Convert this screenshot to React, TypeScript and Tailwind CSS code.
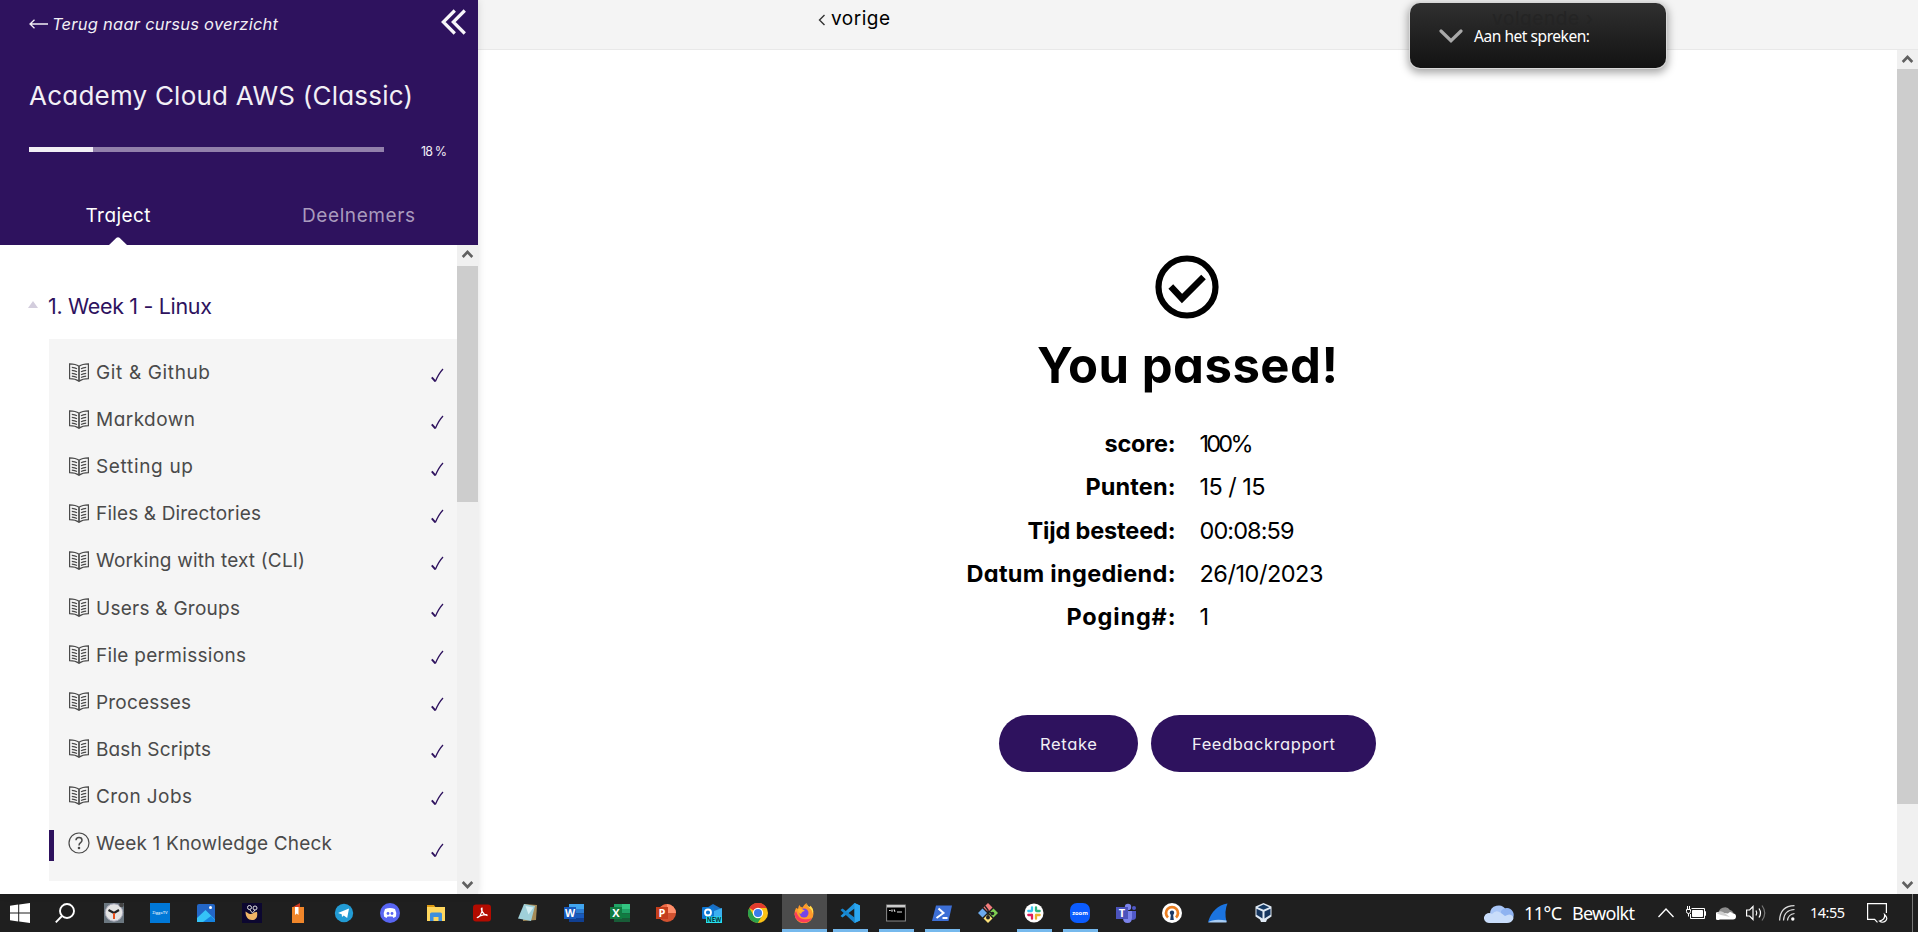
import { useLayoutEffect, useRef, type ReactNode } from "react";

/* Text set to a fixed measure: the tracking is derived from the natural width. */
function Fit({ w, children, className = "" }: { w: number; children: string; className?: string }) {
  const ref = useRef<HTMLSpanElement>(null);
  useLayoutEffect(() => {
    const el = ref.current;
    if (!el || children.length < 2) return;
    el.style.letterSpacing = "0px";
    const tracking = (w - el.getBoundingClientRect().width) / (children.length - 1);
    el.style.letterSpacing = `${tracking}px`;
    el.style.marginRight = `${-tracking}px`;
  }, [w, children]);
  return (
    <span ref={ref} className={`inline-block whitespace-pre ${className}`}>
      {children}
    </span>
  );
}

type Lesson = { title: string; w: number; quiz?: boolean };

const lessons: Lesson[] = [
  { title: "Git & Github", w: 114 },
  { title: "Markdown", w: 99 },
  { title: "Setting up", w: 97 },
  { title: "Files & Directories", w: 165 },
  { title: "Working with text (CLI)", w: 209 },
  { title: "Users & Groups", w: 144 },
  { title: "File permissions", w: 150 },
  { title: "Processes", w: 95 },
  { title: "Bash Scripts", w: 115 },
  { title: "Cron Jobs", w: 96 },
  { title: "Week 1 Knowledge Check", w: 236, quiz: true },
];

const results = [
  { label: "score:", lw: 71, value: "100%", vw: 54 },
  { label: "Punten:", lw: 90, value: "15 / 15", vw: 66 },
  { label: "Tijd besteed:", lw: 148, value: "00:08:59", vw: 95 },
  { label: "Datum ingediend:", lw: 209, value: "26/10/2023", vw: 124 },
  { label: "Poging#:", lw: 109, value: "1", vw: 8 },
];

function BookIcon() {
  return (
    <svg width="20" height="19" viewBox="0 0 20 19" fill="none" stroke="#4a4a4a" strokeWidth="1.2">
      <path d="M10 3.2C7.500 1.400 4 .8.6.8v14.800c3.400 0 6.900.8 9.400 2.600 2.500-1.800 6-2.600 9.400-2.600V.8C16 .8 12.500 1.400 10 3.200Z" />
      <path d="M10 3.200v15" strokeWidth="1.700" />
      <path d="M2.800 4.300c2 .1 3.700.5 5.200 1.400M2.800 7.300c2 .1 3.700.5 5.200 1.400M2.800 10.300c2 .1 3.700.5 5.200 1.400M2.800 13.200c2 .1 3.700.5 5.200 1.400M17.200 4.300c-2 .1-3.700.5-5.200 1.400M17.200 7.300c-2 .1-3.700.5-5.200 1.400M17.200 10.300c-2 .1-3.700.5-5.200 1.400M17.200 13.200c-2 .1-3.700.5-5.200 1.400" />
    </svg>
  );
}

function QuizIcon() {
  return (
    <svg width="22" height="22" viewBox="0 0 22 22" fill="none" stroke="#4a4a4a" strokeWidth="1.200">
      <circle cx="11" cy="11" r="10" />
      <path d="M8 8.300C8 6.500 9.200 5.500 11 5.500s3 1.100 3 2.700c0 2.500-3 2.400-3 5.200" strokeWidth="1.500" />
      <circle cx="11" cy="16" r=".7" fill="#4a4a4a" />
    </svg>
  );
}

function Tick() {
  return (
    <svg width="13" height="15" viewBox="0 0 13 15" fill="none" stroke="#2e125e">
      <path d="M.8 9.300 4.300 13.300" strokeWidth="1.900" />
      <path d="M4.300 13.600C6.200 9 8.600 4.600 12 1" strokeWidth="1.300" />
    </svg>
  );
}

function ScrollArrow({ down = false }: { down?: boolean }) {
  return (
    <svg width="21" height="18" viewBox="0 0 21 18" fill="none" stroke="#606060" strokeWidth="2.600" className="shrink-0">
      <path d={down ? "M5.700 6l4.800 5 4.800-5" : "M5.700 12l4.800-5 4.800 5"} />
    </svg>
  );
}

function Sidebar() {
  return (
    <aside className="z-10 flex w-[478px] shrink-0 flex-col shadow-[0_0_8px_rgba(0,0,0,0.13)]">
      <header className="flex h-[245px] shrink-0 flex-col bg-[#2e125e] text-[#f2eff5]">
        <div className="flex h-12 items-center pl-[29px] pr-3">
          <svg width="20" height="10" viewBox="0 0 20 10" fill="none" stroke="#f2eff5" strokeWidth="1.300">
            <path d="M19 5H1M5.500.7 1 5l4.500 4.300" />
          </svg>
          <Fit w={226} className="ml-[3px] text-[16.500px] italic leading-5">Terug naar cursus overzicht</Fit>
          <svg width="25" height="26" viewBox="0 0 25 26" fill="none" stroke="#f7f5f9" strokeWidth="3.200" className="-mt-[5px] ml-auto">
            <path d="M13.800 1.500 2.300 13l11.500 11.500M23.800 1.500 12.300 13l11.500 11.500" />
          </svg>
        </div>
        <div className="flex h-[95px] items-center pl-[29px]">
          <Fit w={384} className="mt-px text-[26px] leading-8">Academy Cloud AWS (Classic)</Fit>
        </div>
        <div className="flex h-3.5 items-center pl-[29px]">
          <div className="-mt-px h-[5px] w-[355px] bg-[#9280ab]">
            <div className="h-full w-[18%] bg-[#f2eff5]" />
          </div>
          <Fit w={26} className="ml-[37px] mt-1 text-[12.500px] leading-4">18 %</Fit>
        </div>
        <nav className="flex flex-1 text-[19px] leading-5">
          <div className="flex w-[236px] flex-col items-center justify-between pt-[49px]">
            <Fit w={65} className="text-white">Traject</Fit>
            <svg width="18" height="8" viewBox="0 0 18 8" fill="#fff">
              <path d="M0 8 7.500.800Q9-.5 10.500.800L18 8Z" />
            </svg>
          </div>
          <div className="flex flex-1 justify-center pl-[3px] pt-[49px]">
            <Fit w={113} className="text-[#a99bbd]">Deelnemers</Fit>
          </div>
        </nav>
      </header>
      <div className="flex min-h-0 flex-1 bg-white">
        <div className="flex w-[457px] flex-col">
          <h2 className="flex h-[94px] items-center pl-7 pt-6 text-[21.500px] leading-6 text-[#2e125e]">
            <svg width="10" height="7" viewBox="0 0 10 7" fill="#d3cddd">
              <path d="M5 0l5 7H0Z" />
            </svg>
            <Fit w={164} className="ml-2.5 mt-[3px]">1. Week 1 - Linux</Fit>
          </h2>
          <ul className="ml-[49px] h-[542px] bg-[#f5f5f5] pt-[9.500px] text-[19px] leading-6 text-[#4a4a4a]">
            {lessons.map((l) => (
              <li key={l.title} className="flex h-[47.100px] items-center pr-[13px]">
                <span className={`mt-[5px] h-[31px] w-[5px] ${l.quiz ? "bg-[#2e125e]" : ""}`} />
                <span className={l.quiz ? "ml-3.5" : "ml-[15px]"}>{l.quiz ? <QuizIcon /> : <BookIcon />}</span>
                <Fit w={l.w} className={l.quiz ? "ml-1.5 mt-0.5" : "ml-[7px] mt-0.5"}>{l.title}</Fit>
                <span className={`ml-auto ${l.quiz ? "mt-4" : "mt-1.5"}`}>
                  <Tick />
                </span>
              </li>
            ))}
          </ul>
        </div>
        <div className="flex w-[21px] flex-col bg-[#f0f0f0]">
          <ScrollArrow />
          <div className="mt-[3px] h-[236px] bg-[#cdcdcd]" />
          <div className="mt-auto">
            <ScrollArrow down />
          </div>
        </div>
      </div>
    </aside>
  );
}

function Result() {
  return (
    <section className="flex flex-1 flex-col items-center bg-white pt-[205px] text-black">
      <svg width="64" height="64" viewBox="0 0 64 64" fill="none" stroke="#000" className="-ml-px">
        <circle cx="32" cy="32" r="28.500" strokeWidth="6.200" />
        <path d="m15.800 31.500 11.200 12L48.500 22" strokeWidth="6.500" />
      </svg>
      <h1 className="mt-[15px] h-16 text-[49px] font-bold leading-[64px]">
        <Fit w={301}>You passed!</Fit>
      </h1>
      <dl className="mt-6 flex flex-col text-[23.500px]">
        {results.map((r) => (
          <div key={r.label} className="grid h-[43.300px] grid-cols-[220px_220px] items-center gap-[24px]">
            <dt className="text-right font-bold"><Fit w={r.lw}>{r.label}</Fit></dt>
            <dd><Fit w={r.vw}>{r.value}</Fit></dd>
          </div>
        ))}
      </dl>
      <div className="mt-[77px] flex gap-[13px] text-[16.500px] text-[#f2eff5]">
        <button className="h-[57px] w-[139px] rounded-full bg-[#2e125e]"><Fit w={57}>Retake</Fit></button>
        <button className="h-[57px] w-[225px] rounded-full bg-[#2e125e]"><Fit w={143}>Feedbackrapport</Fit></button>
      </div>
    </section>
  );
}

function Main() {
  return (
    <main className="flex flex-1 flex-col">
      <div className="flex h-[50px] items-start border-b border-[#e8e8e8] bg-[#f4f4f4] pl-[340px] pt-[7px] text-[19px] leading-[26px] text-black">
        <div className="flex items-center">
          <svg width="8" height="12" viewBox="0 0 8 12" fill="none" stroke="#333" strokeWidth="1.400"><path d="M6.500 1 1.500 6l5 5" /></svg>
          <Fit w={59} className="-mt-px ml-[5px]">vorige</Fit>
        </div>
      </div>
      <div className="flex min-h-0 flex-1">
        <Result />
        <div className="flex w-[21px] flex-col bg-[#f0f0f0]">
          <ScrollArrow />
          <div className="mt-px h-[735px] bg-[#cdcdcd]" />
          <div className="mt-auto"><ScrollArrow down /></div>
        </div>
      </div>
    </main>
  );
}

function SpeakerPopup() {
  return (
    <div className="absolute left-[1410px] top-[3px] z-20 flex h-[65px] w-[256px] items-center rounded-[10px] bg-linear-to-b from-[#303030] to-[#131313] pl-[29px] font-['Noto_Sans',sans-serif] text-white shadow-[0_0_0_1px_#d8d8d8,0_3px_9px_2px_rgba(0,0,0,0.35)]">
      <svg width="24" height="14" viewBox="0 0 24 14" fill="none" stroke="#a9a9a9" strokeWidth="3.200" strokeLinecap="round">
        <path d="M2 2l10 9.700L22 2" />
      </svg>
      <span className="absolute left-[82px] top-[5px] text-[19px] leading-[22px] text-[#242424] font-[Inter,sans-serif]"><Fit w={101}>volgende ›</Fit></span>
      <Fit w={116} className="relative ml-[11px] text-[15.500px] leading-4">Aan het spreken:</Fit>
    </div>
  );
}

type App = { name: string; open?: boolean; active?: boolean; art: ReactNode };

const glyph = "font-['Open_Sans',sans-serif] font-bold";

const apps: App[] = [
  { name: "clock", art: <>
    <path fill="#6b7780" d="M0 0h20v20H0z" /><circle cx="10" cy="9.500" r="8.700" fill="#e4e4e4" stroke="#aab" /><circle cx="17.500" cy="2" r="2.300" fill="#444" />
    <path d="M4.500 7 10 10l5-3" stroke="#222" strokeWidth="2.200" fill="none" /><path d="M10 10v6" stroke="#e8501c" strokeWidth="2" /></> },
  { name: "tv", art: <><path fill="#0078d7" d="M0 0h20v20H0z" /><text x="10" y="10.500" textAnchor="middle" fontSize="4" fill="#bfdcf5" className={glyph}>ZiggoTV</text></> },
  { name: "photos", art: <>
    <rect x="1" y="1" width="18" height="18" rx="2" fill="#2366c6" /><path d="M1 15 9.500 7l9.500 9.500V19H1Z" fill="#35c3f7" /><path d="m7 19 8-6 4 4v2Z" fill="#1583e0" /><circle cx="14.500" cy="4.500" r="1.500" fill="#fff" /></> },
  { name: "plant", art: <>
    <path fill="#0c0730" d="M0 0h20v20H0z" /><path d="M3.500 8.500c3 1.500 3 3 5.500 2.500s3-2 6-2c1 5-1 8-5 8s-6.500-3-6.500-8.500Z" fill="#efb466" /><circle cx="7.500" cy="4.500" r="2" fill="none" stroke="#ddd" /><circle cx="13" cy="5" r="2" fill="none" stroke="#ddd" /><path d="M7.500 6.500l3 3.500 2.500-3" stroke="#ddd" fill="none" /></> },
  { name: "book", art: <><path d="M4 4.500 12 0v4.500Z" fill="#cf3a20" /><path fill="#f0862a" d="M4 4h12v16H4z" /><path d="M7 4h3.500v8L8.700 10.400 7 12Z" fill="#fff" /></> },
  { name: "telegram", art: <><circle cx="10" cy="10" r="9.200" fill="#229bd4" /><path d="M4 10 15 5.500 13.200 15l-3.500-2.500L8 14l-.3-2.700Z" fill="#fff" /></> },
  { name: "discord", art: <><circle cx="10" cy="10" r="10" fill="#5865f2" /><path d="M5 6q5-2 10 0 2 4 1 7.500L13.500 15l-1-1.500h-5L6.500 15 4 13.500Q3 10 5 6Z" fill="#fff" /><circle cx="8" cy="10.500" r="1.400" fill="#5865f2" /><circle cx="12" cy="10.500" r="1.400" fill="#5865f2" /></> },
  { name: "explorer", art: <><path d="M1 2h7l2 3v3H1Z" fill="#dc9a12" /><path fill="#ffd75e" d="M1 4h18v14H1z" /><path d="M4 11q0-1.500 1.500-1.500h9Q16 9.500 16 11v7h-3.500v-4h-5v4H4Z" fill="#3f8fdc" /></> },
  { name: "acrobat", art: <><rect x="1" y="1.500" width="18" height="17" rx="3" fill="#b30b00" /><path d="M10 5c-2 0 1 7 5 7.500 1-2-7-.5-9.500 2C7 15 11 9 10 5Z" fill="none" stroke="#fff" strokeWidth="1.200" /></> },
  { name: "notepad", art: <><path d="m6 1 13 1-1 15-13 1Z" fill="#a58b57" /><path d="m6 1 11 2-4 15L0 15.500Z" fill="#9fd0d9" /><path d="m7.500 3 8 1.500-5 7Z" fill="#d5eff3" /></> },
  { name: "word", art: <><path fill="#41a5ee" d="M5 1h15v5H5z" /><path fill="#2b7cd3" d="M5 6h15v4.500H5z" /><path fill="#185abd" d="M5 10.500h15v4.500H5z" /><path fill="#103f91" d="M5 15h15v4H5z" /><path fill="#185abd" d="M0 4h12v12H0z" /><text x="6" y="13.800" textAnchor="middle" fontSize="10.500" fill="#fff" className={glyph}>W</text></> },
  { name: "excel", art: <><path fill="#21a366" d="M4 1h8v9H4z" /><path fill="#33c481" d="M12 1h8v5h-8z" /><path fill="#21a366" d="M12 6h8v4.500h-8z" /><path fill="#107c41" d="M12 10.500h8V15h-8z" /><path fill="#185c37" d="M4 10h8v5h8v4H4z" /><path fill="#107c41" d="M0 4h12v12H0z" /><text x="6" y="14" textAnchor="middle" fontSize="11" fill="#fff" className={glyph}>X</text></> },
  { name: "powerpoint", art: <><circle cx="11" cy="10" r="9" fill="#d35230" /><path d="M11 1a9 9 0 0 1 9 9h-9Z" fill="#ff8f6b" /><path d="M11 1v9H2a9 9 0 0 1 9-9Z" fill="#ed6c47" /><path fill="#c43e1c" d="M0 4h12v12H0z" /><text x="6" y="14" textAnchor="middle" fontSize="11" fill="#fff" className={glyph}>P</text></> },
  { name: "outlook", art: <><path d="M3 6 11 1l9 5v9H3Z" fill="#1a6fc4" /><path d="m12 8 8-3v9h-8Z" fill="#3bb0f0" /><rect y="4" width="12" height="12" rx="1" fill="#0f78d4" /><circle cx="6" cy="9.500" r="3" stroke="#fff" strokeWidth="1.800" fill="none" /><path fill="#26e0ee" d="M4 13.500h16V20H4z" /><text x="12" y="19" textAnchor="middle" fontSize="6.200" fill="#07343a" className={glyph}>NEW</text></> },
  { name: "chrome", art: <><circle cx="10" cy="10" r="10" fill="#fbc116" /><path d="M10 10 1.300 5A10 10 0 0 1 18.700 5H10Z" fill="#e33b2e" /><path d="M1.300 5a10 10 0 0 0 8.500 15l4.500-7.500-8.600 0Z" fill="#2ba24c" /><circle cx="10" cy="10" r="5.200" fill="#fff" /><circle cx="10" cy="10" r="4" fill="#3a7cec" /></> },
  { name: "firefox", active: true, open: true, art: <><path d="M2 5q1 0 2 1 .5-3 1.500-4 .5 2 3 2.500Q10 1.500 12.500 0q0 3 3 4 1-.5 1-1.500 3 3 3 8A9.500 9.500 0 0 1 .5 11Q.5 8 2 5Z" fill="#ff9a2b" /><path d="M.5 11A9.500 9.500 0 0 0 18 15q-4 2-9 1T2 8Z" fill="#fb3c5c" /><circle cx="10" cy="10" r="4.500" fill="#7545e8" /><path d="M4 6q4-1 7 2-3 0-4 3-3-1-3-5Z" fill="#ffb327" /><path d="M12.500 0q0 3 3 5t3 6q2-4-2-8l-1 1q-2-1-3-4Z" fill="#ffe14d" /></> },
  { name: "vscode", open: true, art: <><path d="M14.500 0 20 2.500v15L14.500 20V5.500L2.500 14.500 0.500 13 14.500 0Z" fill="#1f93dc" /><path d="M14.500 20 .5 7l2-1.500 12 9Z" fill="#1686cf" /><path d="m14.500 0 5.500 2.500v15L14.500 20Z" fill="#2aa6f0" /></> },
  { name: "terminal", open: true, art: <><rect x=".6" y="2" width="18.800" height="16" fill="#000" stroke="#8b8b8b" /><path fill="#ccc" d="M1 2h18v2.500H1z" /><path d="M3 7.500h1.700M6 6.500v2.200M8 6.500l1 2.200M11 9h5" stroke="#ddd" strokeWidth="1.200" /></> },
  { name: "powershell", open: true, art: <><path d="M4 2.500h16L16.500 18H0Z" fill="#3d6fd6" /><path d="m6.500 5.500 5 4.500-7 5M10.500 15h5" fill="none" stroke="#fff" strokeWidth="2" /></> },
  { name: "git", art: <><path d="m10 0 4.500 4.500L10 9 5.500 4.500Z" fill="#f27d7d" /><path d="m15.500 5.500 4.500 4.500-4.500 4.500L11 10Z" fill="#7fcf52" /><path d="M10 11l4.500 4.500L10 20l-4.500-4.500Z" fill="#fbe27a" /><path d="M4.500 5.500 9 10l-4.500 4.500L0 10Z" fill="#6cabee" /><path d="M7 3l3 4v8M10 8l5 3" stroke="#222" strokeWidth="1.400" fill="none" /><circle cx="10" cy="14.500" r="2" fill="#222" /><circle cx="14.500" cy="10.500" r="1.800" fill="#222" /></> },
  { name: "slack", open: true, art: <><circle cx="10" cy="10" r="9.500" fill="#fff" /><g fill="none" strokeWidth="2.300" strokeLinecap="round"><path d="M8 4.300v3.400M4.300 8h3.400" stroke="#36c5f0" /><path d="M12 4.300v3.400M12.500 8h3.200" stroke="#2eb67d" /><path d="M12 12v3.700M12.500 12h3.200" stroke="#ecb22e" /><path d="M8 12v3.700M4.300 12h3.400" stroke="#e01e5a" /></g></> },
  { name: "zoom", open: true, art: <><rect width="20" height="20" rx="7" fill="#0b5cff" /><text x="10" y="11.700" textAnchor="middle" fontSize="5.800" fill="#fff" className={glyph}>zoom</text></> },
  { name: "teams", art: <><circle cx="12" cy="4" r="3.200" fill="#7b83eb" /><circle cx="18" cy="5" r="2" fill="#5059c9" /><path d="M14 8h6v6q0 3-4 3Z" fill="#5059c9" /><path d="M7 8h9v7q0 5-4.500 5Q7 20 7 15Z" fill="#7b83eb" /><path fill="#4b53bc" d="M0 4h12v12H0z" /><text x="6" y="14" textAnchor="middle" fontSize="11" fill="#fff" className={glyph}>T</text></> },
  { name: "openvpn", art: <><circle cx="10" cy="10" r="10" fill="#fff" /><path d="M6 14.500a6 6 0 1 1 8 0" fill="none" stroke="#ea7e21" strokeWidth="2.800" /><circle cx="10" cy="9.800" r="2.200" fill="#1a3967" /><path fill="#1a3967" d="M9 10.500h2L11.800 17H8.200z" /></> },
  { name: "wireshark", art: <><path d="M0 19Q5 3 19.500.5 16 8 18.500 19Z" fill="#1b74e0" /><path d="M0 19.500q5-4 18.500-2v2Z" fill="#a9cdf3" /></> },
  { name: "virtualbox", art: <><path d="m9.500 0 8 3.500v10L13 16.500 12 19H7l-1-2.500-4.500-3v-10Z" fill="#dfe9f4" /><path d="m9.500 1.500 5.800 2.800-5.800 2.500L3.700 4.300Z" fill="#163a63" /><path d="m2.500 5.700 6 2.800v6.900l-6-3.600ZM16.500 5.700l-6 2.800v6.900l6-3.600Z" fill="#16365f" /></> },
];

function Taskbar() {
  return (
    <footer className="flex h-[38px] shrink-0 bg-[#1f1f1f] font-['Noto_Sans',sans-serif] text-white">
      <div className="flex w-[92px] items-center pl-2.5">
        <svg width="20" height="20" viewBox="0 0 20 20" fill="#fff">
          <path d="M0 2.800 8.200 1.600v7.900H0ZM9.200 1.500 20 0v9.500H9.200ZM0 10.500h8.200v7.900L0 17.200ZM9.200 10.500H20V20L9.200 18.500Z" />
        </svg>
        <svg width="20" height="20" viewBox="0 0 20 20" fill="none" stroke="#fff" strokeWidth="1.900" className="ml-[25px]">
          <circle cx="12" cy="8" r="7" />
          <path d="M7 13 .8 19.300" />
        </svg>
      </div>
      <div className="flex">
        {apps.map((a) => (
          <div key={a.name} className={`mr-px flex w-[45px] flex-col items-center justify-end ${a.active ? "bg-[#4c4c4c]" : ""}`}>
            <svg width="20" height="20" viewBox="0 0 20 20" className="mb-1.5 mr-px">{a.art}</svg>
            <span className={`h-[3px] ${a.active ? "w-full" : "w-[35px]"} ${a.open ? "bg-[#76b9ed]" : ""}`} />
          </div>
        ))}
      </div>
      <div className="ml-auto flex items-center">
        <svg width="30" height="20" viewBox="0 0 30 20">
          <path d="M6 11a8.500 8.500 0 0 1 16-4l2 8H6Z" fill="#a9c6f7" />
          <path d="M17 8a7 7 0 1 1 6 11h-6Z" fill="#8fb3f1" />
          <path d="M5 20a5 5 0 1 1 3-9q4-5 9-1l4 3q5-3 7.500 0t-1.500 6q-2 1-4 1Z" fill="#c9ddfa" />
        </svg>
        <Fit w={38} className="ml-[10px] text-[18px]">11°C</Fit>
        <Fit w={63} className="ml-[10px] text-[18px]">Bewolkt</Fit>
        <svg width="16" height="10" viewBox="0 0 16 10" fill="none" stroke="#fff" strokeWidth="1.300" className="ml-[23px]"><path d="m.5 9 7.500-8 7.500 8" /></svg>
        <svg width="20" height="14" viewBox="0 0 20 14" fill="none" stroke="#fff" className="ml-3"><path d="M5.500 2.500h13v10h-14V8M18.500 5.500h1v4h-1M.5 3.500h4v2q0 2-2 2t-2-2ZM1.500 3.500V0M3.500 3.500V0M2.500 7.500v3" /><path d="M6.500 4.500h10v6h-10z" fill="#fff" /></svg>
        <svg width="20" height="14" viewBox="0 0 20 14" className="ml-2.5"><path d="M3 8a6 5.500 0 0 1 11-4q4 1 4 6Z" fill="#8d8d8d" /><path d="M4 13.500a4 4 0 1 1 0-7l8 1q2-3 5 0 3 0 3 3t-3 3Z" fill="#fff" /><path d="M1 7.500Q3 4 7 6l7 5-9-2Z" fill="#cfcfcf" /></svg>
        <svg width="21" height="18" viewBox="0 0 21 18" fill="none" stroke="#fff" strokeWidth="1.200" className="ml-2.5"><path d="M.6 6h3L7 2.500v13L3.600 12h-3ZM10 6.500q1.500 2.500 0 5M13 4.500q3 4.500 0 9" /><path d="M16 1.500q5.500 7.500 0 15" stroke="#777" /></svg>
        <svg width="16" height="16" viewBox="0 0 16 16" fill="none" stroke="#ddd" strokeWidth="1.200" className="ml-3"><path d="M.6 15.500Q1 1 15.500.6M4.500 15.500Q5 5 15.500 4.500M8.500 15.500q.5-6 7-7" /><circle cx="13.800" cy="14" r="1.700" fill="#fff" stroke="none" /></svg>
        <Fit w={35} className="ml-[15px] text-[14.500px]">14:55</Fit>
        <svg width="21" height="20" viewBox="0 0 21 20" fill="none" stroke="#fff" strokeWidth="1.200" className="ml-[22px]"><path d="M19.400 10V.6H.6v15.800h7l2.900 3" /><path d="M17.500 11.500q1 5-5 6.500 3 2.500 6 0t-1-6.500Z" /></svg>
        <span className="ml-6 mr-[5px] h-[38px] w-px bg-[#777]" />
      </div>
    </footer>
  );
}

export default function App() {
  return (
    <div className="relative flex h-[932px] w-[1918px] flex-col overflow-hidden bg-white font-[Inter,sans-serif] [font-feature-settings:'cv11']">
      <div className="flex h-[894px]">
        <Sidebar />
        <Main />
      </div>
      <SpeakerPopup />
      <Taskbar />
    </div>
  );
}
